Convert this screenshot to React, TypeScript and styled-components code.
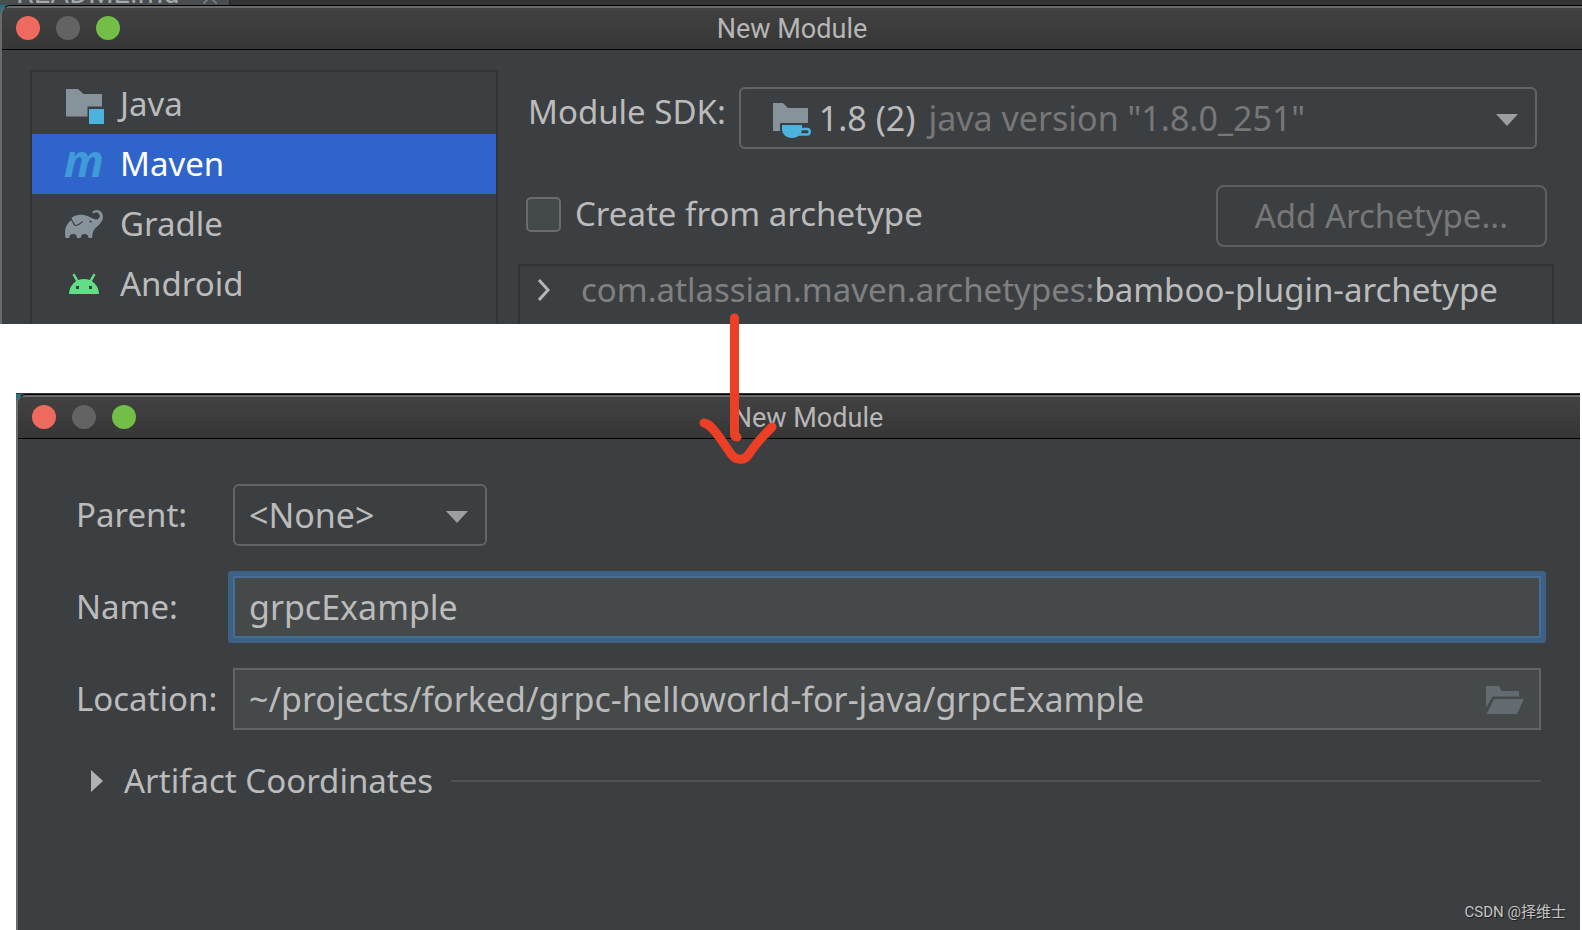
import React, { useState } from "react";
import styled, { createGlobalStyle } from "styled-components";
import { SiGradle } from "react-icons/si";
import { X } from "lucide-react";

const uiFont = `"Noto Sans", "Open Sans", sans-serif`;
const titleFont = `Roboto, "Liberation Sans", sans-serif`;

const GlobalStyle = createGlobalStyle`
  *, *::before, *::after { box-sizing: border-box; }
  body { margin: 0; background: #ffffff; }
  button, input, select { font: inherit; color: inherit; margin: 0; }
`;

const Page = styled.main`
  position: relative;
  display: flex;
  flex-direction: column;
  gap: 69px;
  min-height: 100vh;
  font-family: ${uiFont};
  font-size: 33px;
  line-height: 50px;
  color: #bbbbbb;
`;

const Capture = styled.section<{ $inset?: boolean }>`
  position: relative;
  display: flex;
  flex-direction: column;
  flex: ${(p) => (p.$inset ? "1 0 auto" : "none")};
  margin: ${(p) => (p.$inset ? "0 2px 0 16px" : "0")};
  background: #28708a;
`;

const EditorStrip = styled.div<{ $height: number }>`
  display: flex;
  height: ${(p) => p.$height}px;
  overflow: hidden;
  background: #323436;
`;

const EditorTab = styled.div`
  display: flex;
  align-items: flex-end;
  gap: 18px;
  width: 231px;
  height: 100%;
  padding-left: 16px;
  overflow: hidden;
  border-right: 2px solid #2b2b2b;
  background: #484d4f;
  color: #a5a7a9;
  font-family: ${titleFont};
  font-size: 29px;
  line-height: 24px;

  svg {
    flex: none;
    margin-bottom: -4px;
  }
`;

const Window = styled.div`
  display: flex;
  flex-direction: column;
  flex: 1;
  overflow: hidden;
  border-top: 1px solid #000000;
  border-left: 2px solid #6a6b6c;
  border-top-left-radius: 10px;
  background: #3c3f41;
`;

const TitleBar = styled.header<{ $overhang?: number }>`
  display: grid;
  grid-template-columns: 1fr auto 1fr;
  align-items: center;
  height: 44px;
  margin-right: -${(p) => p.$overhang ?? 0}px;
  padding: 0 14px;
  border-bottom: 1px solid #000000;
  background: linear-gradient(#424242, #363636);
  box-shadow: inset 0 2px 0 #6b6b6b;
`;

const Lights = styled.div`
  display: flex;
  gap: 16px;
`;

const Light = styled.button<{ $color: string }>`
  width: 24px;
  height: 24px;
  padding: 0;
  border: 0;
  border-radius: 50%;
  background: ${(p) => p.$color};
`;

const Title = styled.h1`
  margin: 0;
  padding-top: 2px;
  font-family: ${titleFont};
  font-size: 27px;
  font-weight: 400;
  line-height: 40px;
  color: #b6b6b6;
`;

const WizardBody = styled.div`
  display: flex;
  gap: 20px;
  padding: 20px 28px 0;
`;

const TypeList = styled.ul`
  flex: none;
  width: 468px;
  margin: 0;
  padding: 2px 0 10px;
  list-style: none;
  border: 2px solid #343434;
  border-bottom: 0;
`;

const TypeItem = styled.li<{ $selected?: boolean }>`
  display: flex;
  align-items: center;
  gap: 16px;
  height: 60px;
  padding-left: 32px;
  background: ${(p) => (p.$selected ? "#2f65ca" : "transparent")};
  color: ${(p) => (p.$selected ? "#ffffff" : "inherit")};
`;

const IconBox = styled.span`
  display: flex;
  align-items: center;
  justify-content: center;
  flex: none;
  width: 40px;
  height: 40px;
  color: #87939a;
`;

const Settings = styled.div`
  display: flex;
  flex-direction: column;
  flex: 1;
  min-width: 0;
  padding-top: 17px;
`;

const SdkRow = styled.div`
  display: flex;
  align-items: flex-start;
  gap: 13px;
  padding: 0 17px 0 10px;
`;

const RowLabel = styled.label`
  white-space: nowrap;
`;

const ComboFrame = styled.div<{ $width?: number; $indent: number }>`
  display: flex;
  align-items: center;
  flex: ${(p) => (p.$width ? "none" : "1")};
  width: ${(p) => (p.$width ? `${p.$width}px` : "auto")};
  min-width: 0;
  height: 62px;
  padding: 0 17px 0 ${(p) => p.$indent}px;
  border: 2px solid #646464;
  border-radius: 6px;
  font-size: 34px;
  white-space: nowrap;
`;

const ComboSelect = styled.select`
  field-sizing: content;
  height: 50px;
  padding: 0;
  border: 0;
  outline: 0;
  appearance: none;
  background: transparent;

  ${IconBox} + & {
    margin-left: 8px;
  }
`;

const ComboHint = styled.span`
  margin-left: 13px;
  color: #777777;
`;

const ComboArrow = styled.svg`
  flex: none;
  margin-left: auto;
  fill: #9c9ea1;
`;

const ArchetypeRow = styled.div`
  display: flex;
  align-items: flex-start;
  justify-content: space-between;
  margin-top: 36px;
  padding: 0 7px 0 8px;
`;

const CheckLabel = styled.label`
  display: flex;
  align-items: center;
  gap: 14px;
  height: 58px;
`;

const CheckBox = styled.input`
  appearance: none;
  width: 35px;
  height: 35px;
  margin: 0;
  border: 2px solid #6b6b6b;
  border-radius: 5px;
  background: #43494a;
`;

const OutlineButton = styled.button`
  height: 62px;
  padding: 0 37px;
  border: 2px solid #5e6060;
  border-radius: 8px;
  background: transparent;
  color: #777777;
`;

const ArchetypeTree = styled.div`
  display: flex;
  align-items: flex-start;
  flex: 1;
  gap: 30px;
  margin-top: 17px;
  padding-left: 17px;
  border: 2px solid #323232;
  border-bottom: 0;
  line-height: 48px;
  color: #808080;
  white-space: nowrap;
`;

const Expander = styled.button`
  display: flex;
  align-items: center;
  height: 48px;
  padding: 0;
  border: 0;
  background: transparent;
`;

const Artifact = styled.span`
  color: #bbbbbb;
`;

const Form = styled.form`
  display: flex;
  flex-direction: column;
  gap: 30px;
  padding: 45px 39px 0 58px;
`;

const Field = styled.div`
  display: grid;
  grid-template-columns: 157px 1fr;
  align-items: center;
`;

const InputFrame = styled.div<{ $focused?: boolean }>`
  display: flex;
  align-items: center;
  height: 62px;
  padding: 0 15px 0 14px;
  border: 2px solid ${(p) => (p.$focused ? "#466d94" : "#646464")};
  border-radius: ${(p) => (p.$focused ? "1px" : "0")};
  box-shadow: ${(p) => (p.$focused ? "0 0 0 5px #3d6185" : "none")};
  background: #45494a;
`;

const TextInput = styled.input`
  flex: 1;
  min-width: 0;
  height: 50px;
  padding: 0;
  border: 0;
  outline: 0;
  background: transparent;
  font-size: 34px;
`;

const BrowseButton = styled.button`
  display: flex;
  padding: 2px 0 0;
  border: 0;
  background: transparent;
`;

const Section = styled.div`
  display: flex;
  align-items: center;
  gap: 18px;
  margin: -4px 0 0 15px;

  &::after {
    content: "";
    flex: 1;
    height: 2px;
    background: #515151;
  }
`;

const Disclosure = styled.button`
  display: flex;
  align-items: center;
  gap: 21px;
  height: 50px;
  padding: 0;
  border: 0;
  background: transparent;
`;

const ArrowMark = styled.svg`
  position: absolute;
  top: -85px;
  left: 678px;
  pointer-events: none;
`;

const Watermark = styled.div`
  position: absolute;
  right: 14px;
  bottom: 6px;
  font-family: Roboto, "Noto Sans CJK SC", sans-serif;
  font-size: 15px;
  line-height: 24px;
  color: #c4c4c4;
  text-shadow: 1px 1px 1px #1c1c1c;
`;

const JavaIcon = () => (
  <svg width="40" height="40" viewBox="0 0 40 40" aria-hidden="true">
    <path d="M2 5H14L19.5 10H38V22.5H23.5V32.5H2Z" fill="#87939a" />
    <path d="M25 25H40V40H25Z" fill="#4cb3de" />
  </svg>
);

const MavenIcon = () => (
  <svg width="40" height="40" viewBox="0 0 40 40" overflow="visible" aria-hidden="true">
    <text
      x="20"
      y="33"
      textAnchor="middle"
      fill="#409cd8"
      fontFamily="Noto Sans, sans-serif"
      fontSize="44"
      fontStyle="italic"
      fontWeight="700"
    >
      m
    </text>
  </svg>
);

const AndroidIcon = () => (
  <svg width="40" height="40" viewBox="0 0 40 40" aria-hidden="true">
    <path d="M5 30A15 15 0 0 1 35 30Z" fill="#62de87" />
    <path d="M10 11L14 18M30 11L26 18" stroke="#62de87" strokeWidth="2.500" strokeLinecap="round" />
    <path d="M12 22H15V25H12ZM25 22H28V25H25Z" fill="#3c3f41" />
  </svg>
);

const JdkIcon = () => (
  <svg width="40" height="40" viewBox="0 0 40 40" aria-hidden="true">
    <path d="M2 5H12L17 10H37V25H9V33H2Z" fill="#87939a" />
    <path d="M11 27H31V31C31 36 27 40 21 40C15 40 11 36 11 31Z" fill="#4cb3de" />
    <path d="M31 31H36A2 2 0 0 1 36 36.500H28" fill="none" stroke="#4cb3de" strokeWidth="2.500" />
  </svg>
);

const DropArrow = () => (
  <ComboArrow width="22" height="16" viewBox="0 0 22 16" aria-hidden="true">
    <path d="M0 4H22L11 16Z" />
  </ComboArrow>
);

const WindowHeader = ({ overhang }: { overhang?: number }) => (
  <TitleBar $overhang={overhang}>
    <Lights>
      <Light type="button" aria-label="Close" $color="#ee6a5f" />
      <Light type="button" aria-label="Minimize" $color="#636363" />
      <Light type="button" aria-label="Zoom" $color="#72be47" />
    </Lights>
    <Title>New Module</Title>
  </TitleBar>
);

const moduleTypes = [
  { name: "Java", icon: <JavaIcon /> },
  { name: "Maven", icon: <MavenIcon /> },
  { name: "Gradle", icon: <SiGradle size={38} aria-hidden="true" /> },
  { name: "Android", icon: <AndroidIcon /> },
];

export default function App() {
  const [name, setName] = useState("grpcExample");
  const [location, setLocation] = useState("~/projects/forked/grpc-helloworld-for-java/grpcExample");

  return (
    <Page>
      <GlobalStyle />

      <Capture>
        <EditorStrip $height={5}>
          <EditorTab>
            README.md
            <X size={24} color="#73787b" aria-hidden="true" />
          </EditorTab>
        </EditorStrip>
        <Window>
          <WindowHeader />
          <WizardBody>
            <TypeList>
              {moduleTypes.map((type) => (
                <TypeItem key={type.name} $selected={type.name === "Maven"}>
                  <IconBox>{type.icon}</IconBox>
                  {type.name}
                </TypeItem>
              ))}
            </TypeList>
            <Settings>
              <SdkRow>
                <RowLabel htmlFor="sdk">Module SDK:</RowLabel>
                <ComboFrame $indent={30}>
                  <IconBox>
                    <JdkIcon />
                  </IconBox>
                  <ComboSelect id="sdk">
                    <option>1.8 (2)</option>
                  </ComboSelect>
                  <ComboHint>java version "1.8.0_251"</ComboHint>
                  <DropArrow />
                </ComboFrame>
              </SdkRow>
              <ArchetypeRow>
                <CheckLabel>
                  <CheckBox type="checkbox" />
                  Create from archetype
                </CheckLabel>
                <OutlineButton type="button" disabled>
                  Add Archetype...
                </OutlineButton>
              </ArchetypeRow>
              <ArchetypeTree>
                <Expander type="button" aria-label="Expand">
                  <svg width="14" height="24" viewBox="0 0 14 24" aria-hidden="true">
                    <path d="M2 2L11 12L2 22" fill="none" stroke="#b4b6b8" strokeWidth="3" />
                  </svg>
                </Expander>
                <span>
                  com.atlassian.maven.archetypes:<Artifact>bamboo-plugin-archetype</Artifact>
                </span>
              </ArchetypeTree>
            </Settings>
          </WizardBody>
        </Window>
      </Capture>

      <Capture $inset>
        <EditorStrip $height={1} />
        <Window>
          <WindowHeader overhang={18} />
          <Form>
            <Field>
              <RowLabel htmlFor="parent">Parent:</RowLabel>
              <ComboFrame $width={254} $indent={14}>
                <ComboSelect id="parent">
                  <option>&lt;None&gt;</option>
                </ComboSelect>
                <DropArrow />
              </ComboFrame>
            </Field>
            <Field>
              <RowLabel htmlFor="name">Name:</RowLabel>
              <InputFrame $focused>
                <TextInput id="name" value={name} onChange={(e) => setName(e.target.value)} />
              </InputFrame>
            </Field>
            <Field>
              <RowLabel htmlFor="location">Location:</RowLabel>
              <InputFrame>
                <TextInput id="location" value={location} onChange={(e) => setLocation(e.target.value)} />
                <BrowseButton type="button" aria-label="Browse">
                  <svg width="38" height="28" viewBox="0 0 38 28" fill="#626b70" aria-hidden="true">
                    <path d="M0 0H13L15.500 5H33V10.500H6.500L0 22Z" />
                    <path d="M8 13H38L31 28H.5Z" />
                  </svg>
                </BrowseButton>
              </InputFrame>
            </Field>
            <Section>
              <Disclosure type="button" aria-expanded="false">
                <svg width="12" height="22" viewBox="0 0 12 22" fill="#afb1b3" aria-hidden="true">
                  <path d="M0 0L12 11L0 22Z" />
                </svg>
                Artifact Coordinates
              </Disclosure>
            </Section>
          </Form>
        </Window>
        <ArrowMark
          width="88"
          height="164"
          viewBox="0 0 88 164"
          fill="none"
          stroke="#ec4026"
          strokeWidth="9"
          strokeLinecap="round"
          strokeLinejoin="round"
          aria-hidden="true"
        >
          <path d="M40.500 10V126Q40.500 129 43 129" />
          <path d="M10 115C16 116 21 123 26 130L37 146C41 152 50 154 55 146C60 138 68 129 78 119" />
        </ArrowMark>
        <Watermark>CSDN @择维士</Watermark>
      </Capture>
    </Page>
  );
}
